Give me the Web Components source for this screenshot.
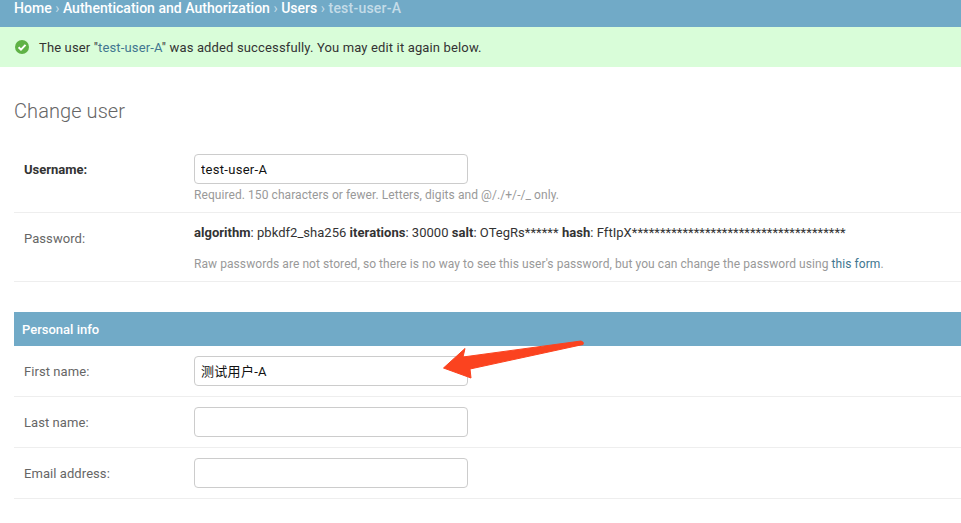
<!DOCTYPE html>
<html>
<head>
<meta charset="utf-8">
<style>
    html, body { margin: 0; padding: 0; background: #fff; overflow: hidden; }
    body { font-family: Roboto, "Noto Sans CJK SC", sans-serif; font-size: 14px; color: #333; height: 523px; position: relative; }
</style>
</head>
<body>
<admin-breadcrumbs current="test-user-A">
    <a>Home</a><a>Authentication and Authorization</a><a>Users</a>
</admin-breadcrumbs>
<admin-message>The user "<b>test-user-A</b>" was added successfully. You may edit it again below.</admin-message>
<admin-content heading="Change user">
    <form-row label="Username:" strong value="test-user-A" help="Required. 150 characters or fewer. Letters, digits and @/./+/-/_ only."></form-row>
    <password-row label="Password:"></password-row>
    <section-bar>Personal info</section-bar>
    <form-row label="First name:" cjk value="测试用户-A"></form-row>
    <form-row label="Last name:"></form-row>
    <form-row label="Email address:"></form-row>
</admin-content>
<annotation-arrow></annotation-arrow>

<script>
const html = String.raw;

const defineEl = (name, class_) => {
    customElements.define(name, class_);
};

class Base extends HTMLElement {
    constructor(markup) {
        super();
        this.shadow = this.attachShadow({mode: 'open'});
        this.shadow.innerHTML = markup;
    }
}

class AdminBreadcrumbs extends Base {
    constructor() {
        super(html`
            <style>
                :host { display: flex; align-items: center; height: 27px; padding: 0 14px 11px; box-sizing: border-box;
                        background: #71aac7; color: #c4dce8; font-size: 14px; font-weight: 500; white-space: pre; letter-spacing: .02px; }
                ::slotted(a) { color: #fff; }
                ::slotted(a)::after { content: " › "; color: #c4dce8; font-weight: 400; }
                #current { letter-spacing: .22px; }
            </style>
            <slot></slot><span id="current"></span>
        `);
    }
    connectedCallback() {
        this.shadow.querySelector("#current").textContent = this.getAttribute("current");
    }
}
defineEl('admin-breadcrumbs', AdminBreadcrumbs);

class AdminMessage extends Base {
    constructor() {
        super(html`
            <style>
                :host { display: flex; align-items: center; gap: 10px; height: 40px; padding: 0 0 0 15px; box-sizing: border-box;
                        background: #d9fdd9; color: #333; font-size: 13px; white-space: pre; letter-spacing: .145px; }
                ::slotted(b) { font-weight: 400; color: #417690; }
                svg { flex: none; }
            </style>
            <svg width="14" height="14" viewBox="0 0 14 14">
                <circle cx="7" cy="7" r="7" fill="#5fb246"/>
                <path d="M3.6 7.2 L6 9.6 L10.5 4.9" fill="none" stroke="#fff" stroke-width="2"/>
            </svg>
            <span><slot></slot></span>
        `);
    }
}
defineEl('admin-message', AdminMessage);

class AdminContent extends Base {
    constructor() {
        super(html`
            <style>
                :host { display: block; padding: 0 0 0 14px; }
                h1 { margin: 0; padding-top: 32px; height: 45px; font-size: 20px; line-height: 24px; font-weight: 300; color: #666; box-sizing: content-box; letter-spacing: .08px; }
            </style>
            <h1></h1>
            <slot></slot>
        `);
    }
    connectedCallback() {
        this.shadow.querySelector("h1").textContent = this.getAttribute("heading");
    }
}
defineEl('admin-content', AdminContent);

const rowStyle = html`
    :host { display: flex; box-sizing: border-box; border-bottom: 1px solid #eee; padding: 10px 0 10px 10px; font-size: 13px; }
    label { width: 170px; height: 30px; flex: none; color: #666; line-height: 32px; letter-spacing: .07px; }
    :host([strong]) label { font-weight: 700; color: #333; letter-spacing: 0; }
    .help { color: #999; font-size: 12px; letter-spacing: .07px; }
`;

class FormRow extends Base {
    constructor() {
        super(html`
            <style>
                ${rowStyle}
                input { display: block; box-sizing: border-box; width: 274px; height: 30px; margin: 0; padding: 0 6px;
                        border: 1px solid #ccc; border-radius: 4px; background: #fff; color: #111; outline: none;
                        font: 13px Roboto, "Noto Sans CJK SC", sans-serif; letter-spacing: .3px; }
                :host([cjk]) input { padding-bottom: 2px; }
                .help { margin: 4px 0 -1px; line-height: 15px; }
                .help:empty { display: none; }
            </style>
            <label></label>
            <div>
                <input type="text">
                <div class="help"></div>
            </div>
        `);
    }
    connectedCallback() {
        this.shadow.querySelector("label").textContent = this.getAttribute("label");
        this.shadow.querySelector("input").value = this.getAttribute("value") || "";
        this.shadow.querySelector(".help").textContent = this.getAttribute("help") || "";
    }
}
defineEl('form-row', FormRow);

class PasswordRow extends Base {
    constructor() {
        super(html`
            <style>
                ${rowStyle}
                :host { height: 69px; padding-top: 0; padding-bottom: 0; }
                label { padding-top: 10px; }
                .value { padding-top: 12px; line-height: 15px; color: #333; white-space: pre; letter-spacing: .03px; }
                .help { margin-top: 17px; line-height: 15px; white-space: pre; }
                .help a { color: #417690; }
            </style>
            <label></label>
            <div>
                <div class="value"><b>algorithm</b>: pbkdf2_sha256 <b>iterations</b>: 30000 <b>salt</b>: OTegRs****** <b>hash</b>: FftIpX**************************************</div>
                <div class="help">Raw passwords are not stored, so there is no way to see this user's password, but you can change the password using <a>this form</a>.</div>
            </div>
        `);
    }
    connectedCallback() {
        this.shadow.querySelector("label").textContent = this.getAttribute("label");
    }
}
defineEl('password-row', PasswordRow);

class SectionBar extends Base {
    constructor() {
        super(html`
            <style>
                :host { display: flex; align-items: center; height: 34px; margin-top: 30px; padding-left: 8px; box-sizing: border-box;
                        background: #71aac7; color: #fff; font-size: 13px; font-weight: 500; }
            </style>
            <slot></slot>
        `);
    }
}
defineEl('section-bar', SectionBar);

// red hand-drawn pointer that lies over the form
class AnnotationArrow extends Base {
    constructor() {
        super(html`
            <style>
                :host { position: absolute; left: 440px; top: 335px; width: 150px; height: 50px; }
                svg { display: block; }
            </style>
            <svg width="150" height="50" viewBox="440 335 150 50">
                <path fill="#fb431f" stroke="#fb431f" stroke-width="1" stroke-linejoin="round"
                      d="M443.5 368 L465 348.5 L463 357 L581 341 Q584.5 342 583 344.5 L470 369 L471 378 Z"/>
            </svg>
        `);
    }
}
defineEl('annotation-arrow', AnnotationArrow);
</script>
</body>
</html>
